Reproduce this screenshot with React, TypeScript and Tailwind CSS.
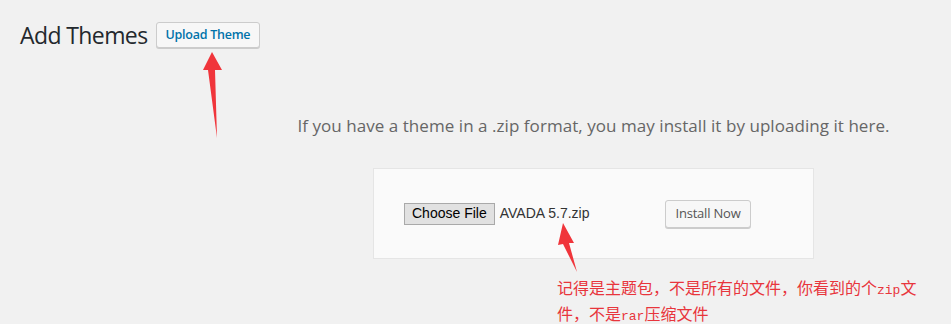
export default function App() {
  return (
    <div className="relative w-[951px] h-[324px] overflow-hidden bg-[#f1f1f1] font-['Open_Sans',sans-serif]">
      {/* Header */}
      <div className="flex items-center gap-[8px] pl-[20px] pt-[22px]">
        <h1 className="text-[23px] leading-[26px] text-[#23282d] tracking-[-0.6px]">Add Themes</h1>
        <button className="h-[26px] px-[9px] rounded-[3px] border border-[#cccccc] bg-[#f7f7f7] shadow-[0_1px_0_#cccccc] text-[12.5px] font-semibold text-[#0073aa] tracking-[-0.25px]">
          Upload Theme
        </button>
      </div>

      {/* Upload area */}
      <div className="flex flex-col items-center pl-[236px]">
        <p className="mt-[66px] text-[17px] leading-[24px] text-[#666666] tracking-[0.05px]">
          If you have a theme in a .zip format, you may install it by uploading it here.
        </p>
        <div className="mt-[30px] w-[441px] h-[91px] border border-[#e5e5e5] bg-[#fafafa] p-[30px] flex items-center">
          <div className="flex items-center w-[261px] font-['Liberation_Sans',sans-serif] text-[14px]">
            <span className="h-[22px] px-[7px] flex items-center border border-[#a9a9a9] bg-[#e1e1e1] text-black">
              Choose File
            </span>
            <span className="ml-[5px] text-[#333333]">AVADA 5.7.zip</span>
          </div>
          <button className="h-[28px] w-[86px] rounded-[3px] border border-[#cccccc] bg-[#f7f7f7] shadow-[0_1px_0_#cccccc] text-[13px] text-[#555555] tracking-[-0.2px]">
            Install Now
          </button>
        </div>
      </div>

      {/* Annotation note */}
      <div className="mt-[17px] pl-[557px] text-[16px] leading-[22px] text-[#e8353c] font-['Noto_Sans_CJK_SC',sans-serif]">
        记得是主题包，不是所有的文件，你看到的个<span className="font-['Liberation_Mono',monospace] text-[13px]">zip</span>文
        <br />
        件，不是<span className="font-['Liberation_Mono',monospace] text-[13px]">rar</span>压缩文件
      </div>

      {/* Arrows */}
      <svg className="absolute left-0 top-0 pointer-events-none" width="951" height="324" viewBox="0 0 951 324">
        <path d="M212 52 L222 70 L215 70 L217 138 L208 70 L203 70 Z" fill="#f0353b" />
        <path d="M563 223 L574 243 L569 243 L577 272 L563 244 L558 245 Z" fill="#f0353b" />
      </svg>
    </div>
  );
}
